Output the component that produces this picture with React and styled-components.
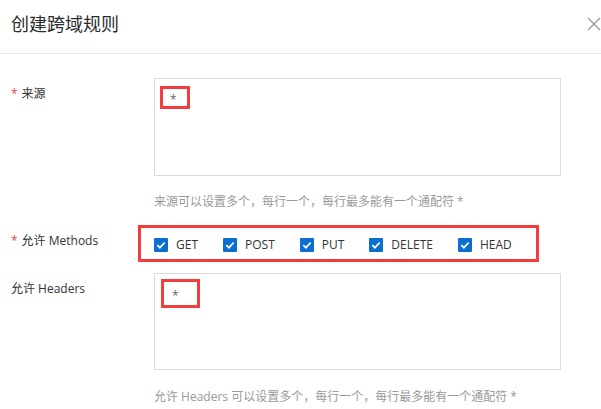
import React from 'react'
import styled, { createGlobalStyle } from 'styled-components'

const GlobalStyle = createGlobalStyle`
  html, body {
    margin: 0;
    padding: 0;
    background: #fff;
  }
  body {
    font-family: 'Open Sans', 'Noto Sans CJK SC', sans-serif;
    color: #333;
  }
`

const Dialog = styled.div`
  width: 601px;
  height: 409px;
  overflow: hidden;
  background: #fff;
`

const Header = styled.div`
  box-sizing: border-box;
  height: 54px;
  padding: 12px 0 0 11px;
  display: flex;
  align-items: flex-start;
  justify-content: space-between;
  border-bottom: 1px solid #e8e8e8;
`

const Title = styled.h2`
  margin: 0;
  font-size: 18px;
  line-height: 24px;
  font-weight: 400;
  color: #2b2b2b;
`

const CloseButton = styled.button`
  border: 0;
  background: none;
  padding: 0;
  margin-top: 5px;
  width: 14px;
  height: 14px;
  display: flex;
  cursor: pointer;
`

const Body = styled.div`
  padding: 24px 0 0 11px;
`

const FormRow = styled.div`
  display: flex;
  align-items: flex-start;
  margin-bottom: ${p => p.$gap || 0}px;
`

const Label = styled.div`
  width: 143px;
  flex-shrink: 0;
  padding-top: 6px;
  font-size: 12px;
  line-height: 20px;
  color: #333;
`

const Required = styled.span`
  color: #e8434e;
  margin-right: 4px;
`

const Control = styled.div`
  width: 407px;
`

const TextBox = styled.div`
  box-sizing: border-box;
  height: ${p => p.$height}px;
  border: 1px solid #dcdcdc;
  background: #fff;
`

const Mark = styled.span`
  box-sizing: border-box;
  display: flex;
  align-items: center;
  width: ${p => p.$w}px;
  height: ${p => p.$h}px;
  margin: ${p => p.$y - 1}px 0 0 ${p => p.$x - 1}px;
  padding: 4px 0 0 ${p => p.$pad}px;
  border: 3px solid #f43c3c;
  font-size: 12px;
  color: #666;
`

const Help = styled.div`
  margin-top: ${p => p.$top}px;
  font-size: 12px;
  line-height: 20px;
  color: #999;
`

const Highlight = styled.div`
  box-sizing: border-box;
  margin-left: -16px;
  width: 401px;
  height: 37px;
  padding: 3px 0 0 13px;
  border: 3px solid #f43c3c;
  display: flex;
  align-items: center;
  gap: 25px;
`

const CheckItem = styled.label`
  display: flex;
  align-items: center;
  gap: 8px;
  font-size: 12px;
  line-height: 16px;
  color: #333;
`

const CheckBox = () => (
  <svg width="14" height="14" viewBox="0 0 14 14">
    <rect width="14" height="14" rx="1" fill="#0b6fcf" />
    <path d="M3.3 7.2 L5.9 9.7 L10.7 4.5" fill="none" stroke="#fff" strokeWidth="1.7" />
  </svg>
)

const methods = ['GET', 'POST', 'PUT', 'DELETE', 'HEAD']

export default function App() {
  return (
    <>
      <GlobalStyle />
      <Dialog>
        <Header>
          <Title>创建跨域规则</Title>
          <CloseButton aria-label="关闭">
            <svg width="14" height="14" viewBox="0 0 14 14">
              <path d="M1 1 L13 13 M13 1 L1 13" stroke="#999" strokeWidth="1.4" />
            </svg>
          </CloseButton>
        </Header>
        <Body>
          <FormRow $gap={13}>
            <Label>
              <Required>*</Required>来源
            </Label>
            <Control>
              <TextBox $height={98}>
                <Mark $w={30} $h={23} $x={6} $y={8} $pad={7}>*</Mark>
              </TextBox>
              <Help $top={16}>来源可以设置多个，每行一个，每行最多能有一个通配符 *</Help>
            </Control>
          </FormRow>
          <FormRow $gap={11}>
            <Label>
              <Required>*</Required>允许 Methods
            </Label>
            <Control>
              <Highlight>
                {methods.map(m => (
                  <CheckItem key={m}>
                    <CheckBox />
                    {m}
                  </CheckItem>
                ))}
              </Highlight>
            </Control>
          </FormRow>
          <FormRow>
            <Label>允许 Headers</Label>
            <Control>
              <TextBox $height={97}>
                <Mark $w={39} $h={29} $x={7} $y={6} $pad={8}>*</Mark>
              </TextBox>
              <Help $top={17}>允许 Headers 可以设置多个，每行一个，每行最多能有一个通配符 *</Help>
            </Control>
          </FormRow>
        </Body>
      </Dialog>
    </>
  )
}
